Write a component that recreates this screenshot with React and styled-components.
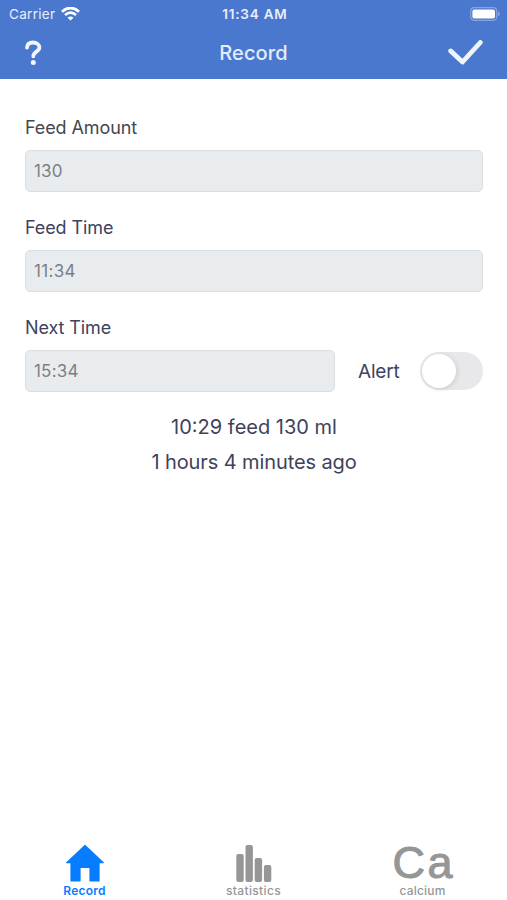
import React, { useState } from 'react';
import styled, { createGlobalStyle } from 'styled-components';

const color = {
  blue: '#4b78cf',
  active: '#087cff',
  gray: '#969696',
  text: '#40425c',
  field: '#e9ecef',
  border: '#dcdfe2',
};

const GlobalStyle = createGlobalStyle`
  * {
    box-sizing: border-box;
  }

  body {
    margin: 0;
    background: #fff;
    font-family: Inter, 'Liberation Sans', sans-serif;
    color: ${color.text};
  }
`;

const Screen = styled.div`
  width: 100%;
  height: 900px;
  display: flex;
  flex-direction: column;
  overflow: hidden;
`;

const Header = styled.header`
  height: 79px;
  flex: none;
  background: ${color.blue};
  color: #fff;
`;

const StatusBar = styled.div`
  height: 27px;
  padding: 0 7px 0 9px;
  display: grid;
  grid-template-columns: 1fr auto 1fr;
  align-items: center;
  font-size: 13.5px;
  line-height: 28px;

  svg {
    display: block;
  }
`;

const Carrier = styled.div`
  display: flex;
  align-items: center;
  gap: 6px;
  color: #e9effa;
  letter-spacing: 0.3px;
`;

const Clock = styled.div`
  font-weight: 600;
  letter-spacing: 0.8px;
  margin-right: -0.8px;
  color: #e9effa;
`;

const Battery = styled.div`
  display: flex;
  justify-content: flex-end;
`;

const NavBar = styled.div`
  height: 52px;
  padding: 0 24px;
  display: grid;
  grid-template-columns: 1fr auto 1fr;
  align-items: center;
`;

const NavButton = styled.button`
  padding: 0;
  border: 0;
  background: none;
  justify-self: ${({ $end }) => ($end ? 'end' : 'start')};

  svg {
    display: block;
  }
`;

const Title = styled.h1`
  margin: 0;
  font-size: 20px;
  line-height: 51px;
  font-weight: 500;
  letter-spacing: 0.1px;
  color: #e4ecfa;
`;

const Form = styled.main`
  flex: 1;
  padding: 36px 24px 0 25px;
`;

const Field = styled.div`
  height: 100px;
`;

const Label = styled.div`
  height: 35px;
  line-height: 25px;
  font-size: 18px;
  letter-spacing: -0.1px;
  color: ${({ $color }) => $color || color.text};
`;

const Row = styled.div`
  display: flex;
  align-items: center;
`;

const Input = styled.input`
  flex: 1;
  min-width: 0;
  height: 42px;
  padding: 0 8px;
  border: 1px solid ${color.border};
  border-radius: 5px;
  background: ${color.field};
  color: #7b7f84;
  font-family: inherit;
  font-size: 17px;
  letter-spacing: ${({ $spacing }) => $spacing || '0.2px'};
  outline: none;
`;

const AlertLabel = styled.span`
  width: 62px;
  margin-left: 23px;
  font-size: 19px;
  letter-spacing: -0.2px;
`;

const Switch = styled.button`
  width: 63px;
  height: 38px;
  padding: 2px;
  border: 0;
  border-radius: 19px;
  background: ${({ $on }) => ($on ? '#4cd964' : '#e8e8ea')};
  display: flex;
  align-items: center;
  justify-content: ${({ $on }) => ($on ? 'flex-end' : 'flex-start')};
`;

const Knob = styled.span`
  width: 34px;
  height: 34px;
  border-radius: 50%;
  background: #fff;
  box-shadow: 1px 1px 5px rgba(0, 0, 0, 0.13);
`;

const Summary = styled.div`
  text-align: center;
  font-size: 20px;
  line-height: 35px;
  margin-top: -5px;
`;

const Line = styled.div`
  letter-spacing: ${({ $spacing }) => $spacing};
`;

const TabBar = styled.nav`
  height: 58px;
  flex: none;
  display: grid;
  grid-template-columns: repeat(3, 1fr);
`;

const Tab = styled.button`
  height: 58px;
  padding: 0;
  border: 0;
  background: none;
  display: flex;
  flex-direction: column;
  align-items: center;
  color: ${({ $active }) => ($active ? color.active : color.gray)};
  font-family: inherit;
  font-size: 12px;
  font-weight: ${({ $active }) => ($active ? 600 : 500)};
  letter-spacing: ${({ $spacing }) => $spacing};

  svg {
    display: block;
    flex: none;
  }
`;

const TabText = styled.span`
  line-height: 14px;
`;

const Symbol = styled.span`
  height: 42px;
  line-height: 41px;
  font-family: 'Liberation Sans', Arial, sans-serif;
  font-size: 45px;
  font-weight: 400;
  letter-spacing: 2.5px;
  margin-right: -2.5px;
  -webkit-text-stroke: 1px ${color.gray};
`;

const WifiIcon = () => (
  <svg width="19" height="14" viewBox="0 0 19 14" fill="none" stroke="#fff">
    <path d="M1 4.7Q9.5-2.7 18 4.7" strokeWidth="2.8" />
    <path d="M4 8.1Q9.5 3.3 15 8.1" strokeWidth="2.6" />
    <path d="M6.5 10.7Q9.5 8.1 12.5 10.7L9.5 13.6Z" fill="#fff" stroke="none" />
  </svg>
);

const BatteryIcon = () => (
  <svg width="30" height="14" viewBox="0 0 30 14">
    <rect x="0.7" y="0.7" width="26" height="12.6" rx="3.5" fill="none" stroke="#86a4df" strokeWidth="1.2" />
    <rect x="2.4" y="2.4" width="22.6" height="9.2" rx="2" fill="#fff" />
    <path d="M28 4.8Q30 5.5 30 7T28 9.2Z" fill="#86a4df" />
  </svg>
);

const HelpIcon = () => (
  <svg width="18" height="26" viewBox="0 0 18 26" fill="none">
    <path
      d="M3 7.6C3.2 4.3 5.5 2.5 9 2.5S15.4 4.6 15.4 7.6C15.4 11.8 9.3 11.6 9.3 16.3"
      stroke="#f1f5fc"
      strokeWidth="3.8"
      strokeLinecap="round"
    />
    <circle cx="9.3" cy="22.6" r="2.5" fill="#f1f5fc" />
  </svg>
);

const CheckIcon = () => (
  <svg width="35" height="26" viewBox="0 0 35 26" fill="none">
    <path
      d="M2.7 11L14.5 22L32.3 2.5"
      stroke="#f0f4f8"
      strokeWidth="4.8"
      strokeLinecap="round"
      strokeLinejoin="round"
    />
  </svg>
);

const HomeIcon = () => (
  <svg width="40" height="42" viewBox="0 0 40 42">
    <path
      d="M20 3.5L38.3 20.7H34V39H25V25.5H15V39H6V20.7H1.7Z"
      fill="currentColor"
      stroke="currentColor"
      strokeWidth="1.2"
      strokeLinejoin="round"
    />
  </svg>
);

const ChartIcon = () => (
  <svg width="36" height="42" viewBox="0 0 36 42" fill="currentColor">
    <rect x="0.3" y="12" width="7.4" height="28" rx="2" />
    <rect x="9.5" y="3" width="7.4" height="37" rx="2" />
    <rect x="18.7" y="16" width="7.4" height="24" rx="2" />
    <rect x="27.9" y="23" width="7.4" height="17" rx="2" />
  </svg>
);

const App = () => {
  const [alert, setAlert] = useState(false);

  return (
    <Screen>
      <GlobalStyle />
      <Header>
        <StatusBar>
          <Carrier>
            Carrier
            <WifiIcon />
          </Carrier>
          <Clock>11:34 AM</Clock>
          <Battery>
            <BatteryIcon />
          </Battery>
        </StatusBar>
        <NavBar>
          <NavButton>
            <HelpIcon />
          </NavButton>
          <Title>Record</Title>
          <NavButton $end>
            <CheckIcon />
          </NavButton>
        </NavBar>
      </Header>
      <Form>
        <Field>
          <Label $color="#44474c">Feed Amount</Label>
          <Row>
            <Input value="130" readOnly />
          </Row>
        </Field>
        <Field>
          <Label>Feed Time</Label>
          <Row>
            <Input value="11:34" $spacing="0.3px" readOnly />
          </Row>
        </Field>
        <Field>
          <Label>Next Time</Label>
          <Row>
            <Input value="15:34" readOnly />
            <AlertLabel>Alert</AlertLabel>
            <Switch $on={alert} onClick={() => setAlert(!alert)}>
              <Knob />
            </Switch>
          </Row>
        </Field>
        <Summary>
          <Line $spacing="0">10:29 feed 130 ml</Line>
          <Line $spacing="-0.1px">1 hours 4 minutes ago</Line>
        </Summary>
      </Form>
      <TabBar>
        <Tab $active $spacing="0.2px">
          <HomeIcon />
          <TabText>Record</TabText>
        </Tab>
        <Tab $spacing="0.35px">
          <ChartIcon />
          <TabText>statistics</TabText>
        </Tab>
        <Tab $spacing="0.2px">
          <Symbol>Ca</Symbol>
          <TabText>calcium</TabText>
        </Tab>
      </TabBar>
    </Screen>
  );
};

export default App;
